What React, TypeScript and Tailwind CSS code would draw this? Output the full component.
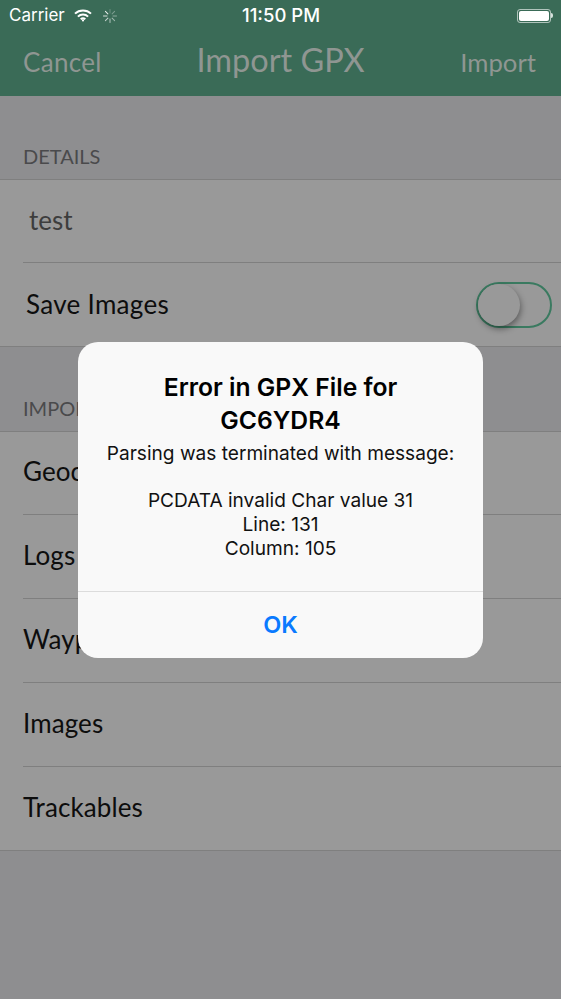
import React from 'react';

const BODY_FONT = 'font-["Lato","Open_Sans",sans-serif]';

const WifiIcon: React.FC = () => (
  <svg width="18" height="13" viewBox="0 0 18 13" fill="none" stroke="white" strokeWidth="2">
    <path d="M1 4.6C5.4 .4 12.6 .4 17 4.6" />
    <path d="M3.9 7.6C6.7 4.9 11.3 4.9 14.1 7.6" />
    <path d="M6.7 10.3C8 9.1 10 9.1 11.3 10.3" />
    <circle cx="9" cy="11.4" r="1.1" fill="white" stroke="none" />
  </svg>
);

const Spinner: React.FC = () => (
  <svg width="16" height="16" viewBox="0 0 16 16" stroke="white" strokeWidth="1" strokeLinecap="round">
    {[0, 45, 90, 135, 180, 225, 270, 315].map((deg, i) => (
      <line key={deg} x1="8" y1="1.5" x2="8" y2="5" opacity={0.25 + i * 0.09} transform={`rotate(${deg} 8 8)`} />
    ))}
  </svg>
);

const BatteryIcon: React.FC = () => (
  <div className="flex items-center">
    <div className="w-[34px] h-[14px] rounded-[3px] border border-white/60 p-[1px]">
      <div className="w-full h-full bg-white rounded-[2px]"></div>
    </div>
    <div className="w-[2px] h-[5px] bg-white/80 rounded-r-sm"></div>
  </div>
);

const StatusBar: React.FC = () => (
  <div className="relative h-[30px] pt-[1px] flex items-center justify-between pl-[9px] pr-[8px] text-white text-[17px] font-['Inter',sans-serif]">
    <div className="flex items-center">
      <span>Carrier</span>
      <span className="ml-[9px]"><WifiIcon /></span>
      <span className="ml-[10px]"><Spinner /></span>
    </div>
    <span className="absolute left-[1px] right-0 text-center text-[18.5px] font-medium">11:50 PM</span>
    <BatteryIcon />
  </div>
);

const NavBar: React.FC = () => (
  <div className={`relative h-[66px] flex items-center justify-between pl-[23px] pr-[25px] pb-[2px] text-[#8f9692] text-[26px] ${BODY_FONT}`}>
    <span className="tracking-[0.3px]">Cancel</span>
    <span className="absolute left-0 right-0 text-center text-[32.5px] pb-[3px]">Import GPX</span>
    <span className="text-[25.7px]">Import</span>
  </div>
);

const Toggle: React.FC = () => (
  <div className="w-[76px] h-[46px] rounded-full border-[2px] border-[#3a7a60] bg-[#999999]">
    <div className="w-[42px] h-[42px] rounded-full bg-[#999999] shadow-[1px_3px_6px_rgba(0,0,0,0.4)]"></div>
  </div>
);

const Row: React.FC<{ label: string; height: string; last?: boolean }> = ({ label, height, last }) => (
  <div className="pl-[23px]">
    <div className={`${height} ${last ? '' : 'border-b border-[#7f7f7f]'} flex items-center pb-[3px] text-[26px] text-[#0d0d0d] tracking-[0.1px]`}>
      {label}
    </div>
  </div>
);

const Section: React.FC<{ title: string; height: string; children: React.ReactNode }> = ({ title, height, children }) => (
  <>
    <div className={`${height} flex items-end pl-[23px] pb-[8px] text-[20px] text-[#4a4a4c] bg-[#8e8e90] border-b border-[#7f7f7f]`}>
      {title}
    </div>
    <div className="bg-[#999999] border-b border-[#7f7f7f]">{children}</div>
  </>
);

const App: React.FC = () => {
  return (
    <div className={`relative w-[561px] h-[999px] overflow-hidden bg-[#8e8e90] ${BODY_FONT}`}>
      <div className="bg-[#3a6b57]">
        <StatusBar />
        <NavBar />
      </div>

      <Section title="DETAILS" height="h-[84px]">
        <div className="pl-[23px]">
          <div className="h-[83px] flex items-center pl-[6px] pb-[2px] text-[26px] text-[#3d3d3d] border-b border-[#7f7f7f]">test</div>
        </div>
        <div className="h-[83px] flex items-center justify-between pl-[26px] pr-[9px] text-[26px] tracking-[0.3px] text-[#0d0d0d]">
          <span>Save Images</span>
          <Toggle />
        </div>
      </Section>

      <Section title="IMPORT" height="h-[85px]">
        <Row label="Geocaches" height="h-[83px]" />
        <Row label="Logs" height="h-[84px]" />
        <Row label="Waypoints" height="h-[84px]" />
        <Row label="Images" height="h-[84px]" />
        <Row label="Trackables" height="h-[83px]" last />
      </Section>

      <div className="absolute left-[78px] top-[342px] w-[405px] h-[316px] rounded-[20px] bg-[#f9f9f9] text-black text-center font-['Inter',sans-serif] flex flex-col">
        <div className="h-[250px] border-b border-[#dcdcdc] pt-[29px]">
          <div className="text-[24.7px] leading-[33px] font-semibold">Error in GPX File for<br />GC6YDR4</div>
          <div className="mt-[4px] text-[19.1px] leading-[24px] text-[#111111]">
            <div>Parsing was terminated with message:</div>
            <div className="mt-[23px]">PCDATA invalid Char value 31</div>
            <div>Line: 131</div>
            <div>Column: 105</div>
          </div>
        </div>
        <div className="flex-1 flex items-center justify-center text-[23.5px] font-semibold text-[#0a7aff]">OK</div>
      </div>
    </div>
  );
};

export default App;
